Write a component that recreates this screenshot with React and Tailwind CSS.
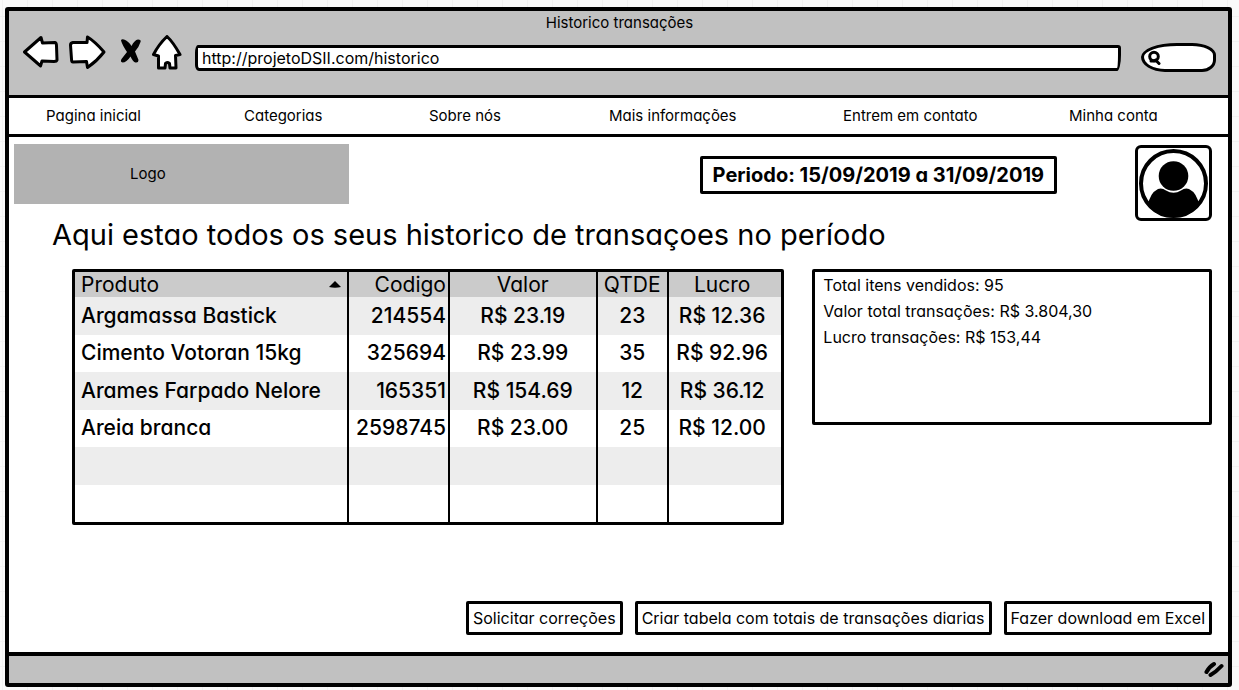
const navItems = [
  "Pagina inicial",
  "Categorias",
  "Sobre nós",
  "Mais informações",
  "Entrem em contato",
  "Minha conta",
];

const rows = [
  ["Argamassa Bastick", "214554", "R$ 23.19", "23", "R$ 12.36"],
  ["Cimento Votoran 15kg", "325694", "R$ 23.99", "35", "R$ 92.96"],
  ["Arames Farpado Nelore", "165351", "R$ 154.69", "12", "R$ 36.12"],
  ["Areia branca", "2598745", "R$ 23.00", "25", "R$ 12.00"],
  ["", "", "", "", ""],
  ["", "", "", "", ""],
];

const summary = [
  "Total itens vendidos: 95",
  "Valor total transações: R$ 3.804,30",
  "Lucro transações: R$ 153,44",
];

const actions = [
  "Solicitar correções",
  "Criar tabela com totais de transações diarias",
  "Fazer download em Excel",
];

function BrowserBar() {
  return (
    <header className="h-[84px] bg-[#c1c1c1] pr-3 pl-[14px]">
      <h1 className="text-center text-[15px] leading-6">Historico transações</h1>
      <div className="flex items-start">
        <button aria-label="Voltar" className="mr-2">
          <svg width="38" height="36" viewBox="1 1 38 36" fill="white" stroke="black" strokeWidth="3" strokeLinejoin="round">
            <path d="M2.5 18 L19 3.5 L20.500 9 L33 8.500 Q34.500 8.700 34.500 12 L35 26 Q34.500 27.500 32 27.500 L20 27 L18.500 32 Q13 27 2.500 18 Z" />
          </svg>
        </button>
        <button aria-label="Avançar" className="mr-3">
          <svg width="38" height="36" viewBox="1 1 38 36" fill="white" stroke="black" strokeWidth="3" strokeLinejoin="round">
            <path d="M2.500 11 Q2.500 9 5 8.500 L19 8.500 L19.500 3 Q27 7.500 36 18 Q29 27 19.500 33.500 L18.500 27.500 L5 28 Q3.500 28 3.500 25 Z" />
          </svg>
        </button>
        <button aria-label="Parar" className="mr-2">
          <svg width="24" height="36" viewBox="1 1 24 36" fill="black">
            <path d="M3 6.500 Q3.500 4.500 6 5.500 Q10.500 7 13.500 12 Q16.500 6 20 5.500 Q23.500 5.500 22.500 8 Q21 13 17 17.500 L20.500 26 Q20.500 29 17.500 28.500 Q15 28 12.500 22.500 Q8.500 28.500 4.500 28.500 Q2 28 3.500 25 L9 18 Q4.500 11.500 3 6.500 Z" />
          </svg>
        </button>
        <button aria-label="Início" className="mr-3">
          <svg width="32" height="36" viewBox="0 1 32 36" fill="white" stroke="black" strokeWidth="3" strokeLinejoin="round">
            <path d="M16 2.500 Q22 8 29 20.500 L24.500 21.500 L25 34 L19 34 L18.500 29.500 Q16 27.500 14.500 29.500 L14 34 L7.500 34 L7.500 22 L2.500 20.500 Q8 10 16 2.500 Z" />
          </svg>
        </button>
        <input
          type="text"
          aria-label="Endereço"
          defaultValue="http://projetoDSII.com/historico"
          className="mt-2.5 h-[26px] min-w-0 flex-1 rounded-[3px_3px_4px_4px/8px_3px_16px_6px] border-[3px] border-black bg-white px-1 text-base outline-none"
        />
        <label className="mt-2 ml-5 flex h-[29px] w-[75px] items-center rounded-[36px_24px_14px_24px/14px_12px_12px_15px] border-[3px] border-black bg-white pl-[3px]">
          <svg width="14" height="16" viewBox="0 0 14 16" fill="none" stroke="black" strokeWidth="3" strokeLinecap="round">
            <circle cx="7" cy="6.500" r="4.300" />
            <path d="M8.500 10 L12 13.500 M4 11 L9 11" />
          </svg>
          <input type="text" aria-label="Pesquisar" className="min-w-0 flex-1 bg-transparent outline-none" />
        </label>
      </div>
    </header>
  );
}

function Avatar() {
  return (
    <button aria-label="Minha conta" className="rounded-[6px] border-[3px] border-black bg-white">
      <svg width="71" height="70" viewBox="0 0 71 70">
        <clipPath id="disc">
          <circle cx="35.500" cy="35.500" r="34" />
        </clipPath>
        <circle cx="35.500" cy="35.500" r="32.500" fill="white" stroke="black" strokeWidth="4" />
        <path clipPath="url(#disc)" d="M10 57 Q12 45 20 41 Q24 39.500 28 42.500 Q35.500 47 43 42.500 Q47 39.500 51 41 Q59 45 61 57 L56 70 L15 70 Z" />
        <circle cx="35.500" cy="28" r="14.800" />
      </svg>
    </button>
  );
}

function Transactions() {
  const cell = "border-l-2 border-black px-0.5 first:border-l-0 first:pl-1.5";
  return (
    <table className="h-[256px] w-full table-fixed border-separate border-spacing-0 rounded-[2px] border-[3px] border-black bg-white text-[21px] leading-6 font-medium">
      <colgroup>
        <col className="w-[38.5%]" />
        <col className="w-[14.3%]" />
        <col className="w-[20.900%]" />
        <col className="w-[10.100%]" />
        <col className="w-[16.200%]" />
      </colgroup>
      <thead>
        <tr className="h-[25px] bg-[#cbcbcb]">
          <th aria-sort="ascending" className={`${cell} font-normal`}>
            <button className="flex w-full items-center justify-between pr-1">
              Produto
              <svg width="12" height="7" viewBox="0 0 12 7">
                <path d="M6 0 L12 6 Q6 7.500 0 6 Z" />
              </svg>
            </button>
          </th>
          <th className={`${cell} text-right font-normal`}>Codigo</th>
          <th className={`${cell} text-center font-normal`}>Valor</th>
          <th className={`${cell} text-center font-normal`}>QTDE</th>
          <th className={`${cell} pr-2 text-center font-normal`}>Lucro</th>
        </tr>
      </thead>
      <tbody>
        {rows.map((row, i) => (
          <tr key={i} className="h-[37px] odd:bg-[#ededed]">
            <td className={cell}>{row[0]}</td>
            <td className={`${cell} text-right`}>{row[1]}</td>
            <td className={`${cell} text-center`}>{row[2]}</td>
            <td className={`${cell} text-center`}>{row[3]}</td>
            <td className={`${cell} pr-2 text-center`}>{row[4]}</td>
          </tr>
        ))}
      </tbody>
    </table>
  );
}

export default function App() {
  return (
    <div className="flex min-h-screen bg-[#fafafa] bg-[linear-gradient(#f2f2f2_1px,transparent_1px),linear-gradient(90deg,#f2f2f2_1px,transparent_1px)] bg-[size:25px_25px] bg-[position:2px_16px] pt-[7px] pr-[7px] pb-[3px] pl-[5px] font-['Inter',sans-serif] text-black [font-feature-settings:'cv11']">
      <div className="flex flex-1 flex-col rounded-[3px] border-4 border-black bg-white">
        <BrowserBar />
        <nav className="grid grid-cols-[198fr_185fr_180fr_234fr_226fr_159fr] border-y-[3px] border-black bg-white pl-[37px] text-[15px] leading-9">
          {navItems.map((item) => (
            <a key={item} href="#" className="whitespace-nowrap">
              {item}
            </a>
          ))}
        </nav>
        <main className="flex flex-1 flex-col pr-4 pl-[5px]">
          <div className="flex items-start pt-[7px]">
            <div className="flex h-[60px] w-[335px] items-center bg-[#b2b2b2] pl-[116px] text-[15px]">Logo</div>
            <p className="mt-3 ml-auto rounded-[2px] border-[3px] border-black px-[10px] text-xl leading-8 font-bold whitespace-nowrap">
              Periodo: 15/09/2019 a 31/09/2019
            </p>
            <div className="ml-[78px] flex pt-px">
              <Avatar />
            </div>
          </div>
          <h2 className="pl-[38px] text-[29px] leading-7">
            Aqui estao todos os seus historico de transaçoes no período
          </h2>
          <div className="grid grid-cols-[713fr_400fr] items-start gap-7 pt-5 pl-[58px]">
            <Transactions />
            <ul className="min-h-[156px] rounded-[2px] border-[3px] border-black bg-white px-2 text-base leading-[26px]">
              {summary.map((line) => (
                <li key={line}>{line}</li>
              ))}
            </ul>
          </div>
          <div className="mt-auto flex justify-end gap-3 pb-[17px]">
            {actions.map((label) => (
              <button key={label} className="rounded-[2px] border-[3px] border-black bg-white px-1 text-base leading-7">
                {label}
              </button>
            ))}
          </div>
        </main>
        <footer className="flex h-[31px] items-center justify-end border-t-4 border-black bg-[#c1c1c1] pr-1">
          <svg width="20" height="17" viewBox="0 0 20 17" fill="none" stroke="black" strokeWidth="4" strokeLinecap="round">
            <path d="M2.500 11 Q5 6 10 3 M6.500 14 Q12 11 17.500 5" />
          </svg>
        </footer>
      </div>
    </div>
  );
}
